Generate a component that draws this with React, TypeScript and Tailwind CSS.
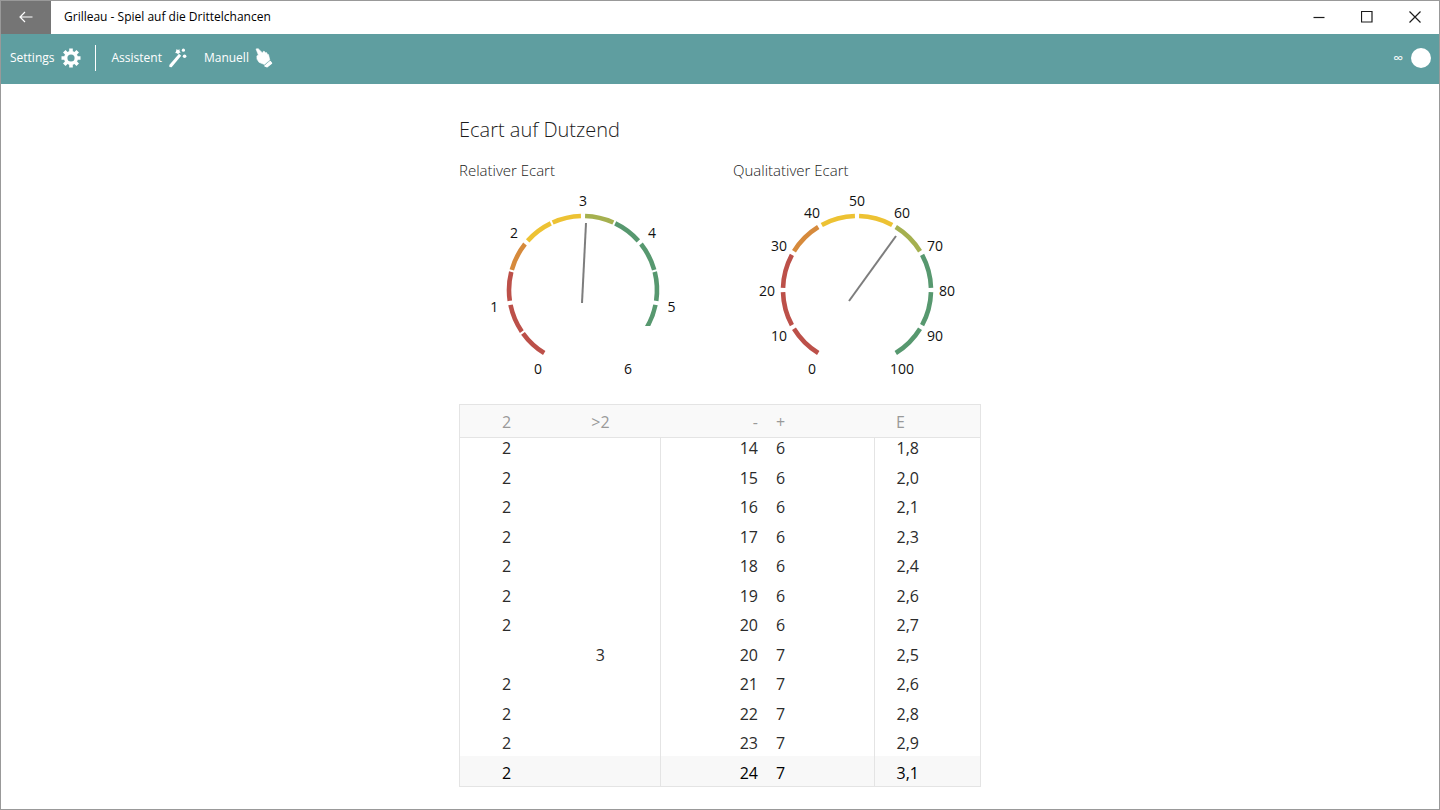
import type { ReactNode } from 'react';

type Segment = { from: number; to: number; color: string; flatEnd?: boolean };

interface GaugeProps {
  title: string;
  max: number;
  step: number;
  segments: Segment[];
  needle: [number, number, number, number];
}

const RED = '#bc5049';
const ORANGE = '#d68a3c';
const YELLOW = '#edc233';
const OLIVE = '#a5b04f';
const GREEN = '#57986f';

const CX = 124;
const CY = 108;
const RADIUS = 74;
const LABEL_RADIUS = 90;

function point(angle: number, radius: number) {
  const rad = (angle * Math.PI) / 180;
  return { x: CX + radius * Math.sin(rad), y: CY - radius * Math.cos(rad) };
}

function arc(from: number, to: number) {
  const a = point(from, RADIUS);
  const b = point(to, RADIUS);
  return `M${a.x} ${a.y}A${RADIUS} ${RADIUS} 0 0 1 ${b.x} ${b.y}`;
}

function Gauge({ title, max, step, segments, needle }: GaugeProps) {
  const toAngle = (value: number) => -150 + (value / max) * 300;
  // labelled ticks get a wider gap than the ones in between
  const gap = (value: number) => (value % step === 0 ? 1.6 : 0.8);
  const labels = Array.from({ length: max / step + 1 }, (_, i) => i * step);

  return (
    <section>
      <h2 className="text-[15px] leading-6 font-light text-[#1a1a1a]">{title}</h2>
      <svg viewBox="0 0 248 222" className="block w-full" role="img" aria-label={title}>
        <clipPath id="flat-end">
          <rect x="0" y="0" width="248" height="144" />
        </clipPath>
        {segments.map((s) => (
          <path
            key={s.from}
            d={arc(toAngle(s.from) + gap(s.from), toAngle(s.to) - gap(s.to))}
            fill="none"
            stroke={s.color}
            strokeWidth="4.6"
            clipPath={s.flatEnd ? 'url(#flat-end)' : undefined}
          />
        ))}
        <line x1={needle[0]} y1={needle[1]} x2={needle[2]} y2={needle[3]} stroke="#7d7d7d" strokeWidth="2" />
        {labels.map((label) => {
          const p = point(toAngle(label), LABEL_RADIUS);
          return (
            <text key={label} x={p.x} y={p.y + 6} textAnchor="middle" fontSize="14" fill="#111">
              {label}
            </text>
          );
        })}
      </svg>
    </section>
  );
}

const relative: Segment[] = [
  { from: 0, to: 0.5, color: RED },
  { from: 0.5, to: 1, color: RED },
  { from: 1, to: 1.5, color: RED },
  { from: 1.5, to: 2, color: ORANGE },
  { from: 2, to: 2.5, color: YELLOW },
  { from: 2.5, to: 3, color: YELLOW },
  { from: 3, to: 3.5, color: OLIVE },
  { from: 3.5, to: 4, color: GREEN },
  { from: 4, to: 4.5, color: GREEN },
  { from: 4.5, to: 5, color: GREEN },
  { from: 5, to: 5.5, color: GREEN, flatEnd: true },
];

const qualitative: Segment[] = [RED, RED, RED, ORANGE, YELLOW, YELLOW, OLIVE, GREEN, GREEN, GREEN].map((color, i) => ({
  from: i * 10,
  to: i * 10 + 10,
  color,
}));

const rows = [
  ['2', '', '14', '6', '1,8'],
  ['2', '', '15', '6', '2,0'],
  ['2', '', '16', '6', '2,1'],
  ['2', '', '17', '6', '2,3'],
  ['2', '', '18', '6', '2,4'],
  ['2', '', '19', '6', '2,6'],
  ['2', '', '20', '6', '2,7'],
  ['', '3', '20', '7', '2,5'],
  ['2', '', '21', '7', '2,6'],
  ['2', '', '22', '7', '2,8'],
  ['2', '', '23', '7', '2,9'],
  ['2', '', '24', '7', '3,1'],
];

// the oldest row sits tight under the header, the latest one is highlighted
function rowClass(i: number) {
  if (i === 0) return 'h-6 *:pb-0.5';
  if (i === rows.length - 1) return 'h-[30px] bg-[#f8f8f8] text-black *:pt-1';
  return i % 2 ? 'h-[29px] *:pt-1' : 'h-[30px] *:pt-1';
}

function HistoryTable() {
  return (
    <div className="border border-[#e4e4e4]">
      <table className="w-full table-fixed text-base leading-5 text-[#2b2b2b]">
        <colgroup>
          <col className="w-[93px]" />
          <col className="w-[107px]" />
          <col className="w-[106px]" />
          <col className="w-[108px]" />
          <col />
        </colgroup>
        <thead>
          <tr className="h-8 border-b border-[#e4e4e4] bg-[#f9f9f9] text-[#999] *:pt-0.5">
            <th className="font-normal">2</th>
            <th className="pr-3 font-normal">&gt;2</th>
            <th className="pr-2 text-right font-normal">-</th>
            <th className="pl-2.5 text-left font-normal">+</th>
            <th className="pl-[22px] text-left font-normal">E</th>
          </tr>
        </thead>
        <tbody>
          {rows.map(([two, over, minus, plus, ecart], i) => (
            <tr key={minus + plus} className={rowClass(i)}>
              <td className="text-center">{two}</td>
              <td className="border-r border-[#e4e4e4] pr-3 text-center">{over}</td>
              <td className="pr-2 text-right">{minus}</td>
              <td className="border-r border-[#e4e4e4] pl-2.5">{plus}</td>
              <td className="pl-[22px]">{ecart}</td>
            </tr>
          ))}
        </tbody>
      </table>
    </div>
  );
}

function GearIcon() {
  return (
    <svg width="20" height="20" viewBox="0 0 20 20" fill="none" stroke="currentColor">
      <circle cx="10" cy="10" r="5.3" strokeWidth="3.4" />
      {[0, 45, 90, 135].map((angle) => (
        <path key={angle} d="M10 .5v3.5M10 16v3.5" strokeWidth="3.6" transform={`rotate(${angle} 10 10)`} />
      ))}
    </svg>
  );
}

function WandIcon() {
  return (
    <svg width="20" height="20" viewBox="0 0 20 20" fill="currentColor">
      <path d="M11 5.8l2.2 1.9L3.6 19.2 1.4 19 1.3 17z" />
      <path d="M8.6.9l1.3 1 1.7-.6-.1 1.8 1.2 1.3-1.7.6-.8 1.5-1.2-1.3-1.8-.2.8-1.5z" />
      <circle cx="15.4" cy="2.2" r="1.6" />
      <circle cx="16.6" cy="8.2" r="1.8" />
    </svg>
  );
}

function HandIcon() {
  return (
    <svg width="18" height="20" viewBox="0 0 18 20" fill="currentColor" stroke="currentColor" strokeLinejoin="round">
      <path
        strokeWidth=".6"
        d="M1 .9l2.2-.2 4.3 4.2.9-1.6 1.2.3.6 1.2 1.4-.2.7 1.6 1.2.4 1.3 5.4-5.4 4.5-5.4-2.2-2-3.2-.1-3.2 1.5-.8z"
      />
      <path strokeWidth="1.2" d="M9.8 18l5.4-4.6 1.4 1.8-4.4 3.7z" />
    </svg>
  );
}

function ToolButton({ label, children }: { label: string; children: ReactNode }) {
  return (
    <button className="flex items-center gap-1.5">
      {label}
      {children}
    </button>
  );
}

function WindowButton({ label, d }: { label: string; d: string }) {
  return (
    <button aria-label={label} className="flex h-full w-12 items-center justify-center pb-px">
      <svg width="12" height="12" viewBox="0 0 12 12" fill="none" stroke="currentColor" strokeWidth="1.2">
        <path d={d} />
      </svg>
    </button>
  );
}

export default function App() {
  return (
    <div className="flex min-h-screen flex-col border border-[#999] bg-white font-['Open_Sans',sans-serif] text-[#1c1c1c]">
      <header className="flex h-[33px] items-center">
        <button aria-label="Zurück" className="flex h-full w-[50px] items-center justify-center bg-[#757575] pb-px text-white">
          <svg width="14" height="12" viewBox="0 0 14 12" fill="none" stroke="currentColor" strokeWidth="1.2">
            <path d="M13.5 6H1M6 1L1 6l5 5" />
          </svg>
        </button>
        <h1 className="flex-1 pb-px pl-[13px] text-xs text-black">Grilleau - Spiel auf die Drittelchancen</h1>
        <WindowButton label="Minimieren" d="M.5 6.5h11" />
        <WindowButton label="Maximieren" d="M.5 .5h10.5v10.5h-10.5z" />
        <WindowButton label="Schließen" d="M.5 .5l11 11M11.5 .5l-11 11" />
      </header>

      <nav className="flex h-[50px] items-center bg-[#5f9ea0] pr-2 pb-0.5 pl-[9px] text-xs text-white">
        <ToolButton label="Settings">
          <GearIcon />
        </ToolButton>
        <span className="mr-4 ml-3.5 h-[26px] w-px bg-white" />
        <div className="flex gap-4">
          <ToolButton label="Assistent">
            <WandIcon />
          </ToolButton>
          <ToolButton label="Manuell">
            <HandIcon />
          </ToolButton>
        </div>
        <button className="ml-auto flex items-center gap-2">
          <span className="text-sm">∞</span>
          <span className="size-5 rounded-full bg-white" />
        </button>
      </nav>

      <main className="mx-auto w-full max-w-[522px] pt-8">
        <h1 className="mb-3.5 text-xl font-light">Ecart auf Dutzend</h1>
        <div className="grid grid-cols-2 gap-[26px]">
          <Gauge title="Relativer Ecart" max={6} step={1} segments={relative} needle={[123, 121, 127, 41]} />
          <Gauge title="Qualitativer Ecart" max={100} step={10} segments={qualitative} needle={[116, 119, 163, 54]} />
        </div>
        <HistoryTable />
      </main>
    </div>
  );
}
